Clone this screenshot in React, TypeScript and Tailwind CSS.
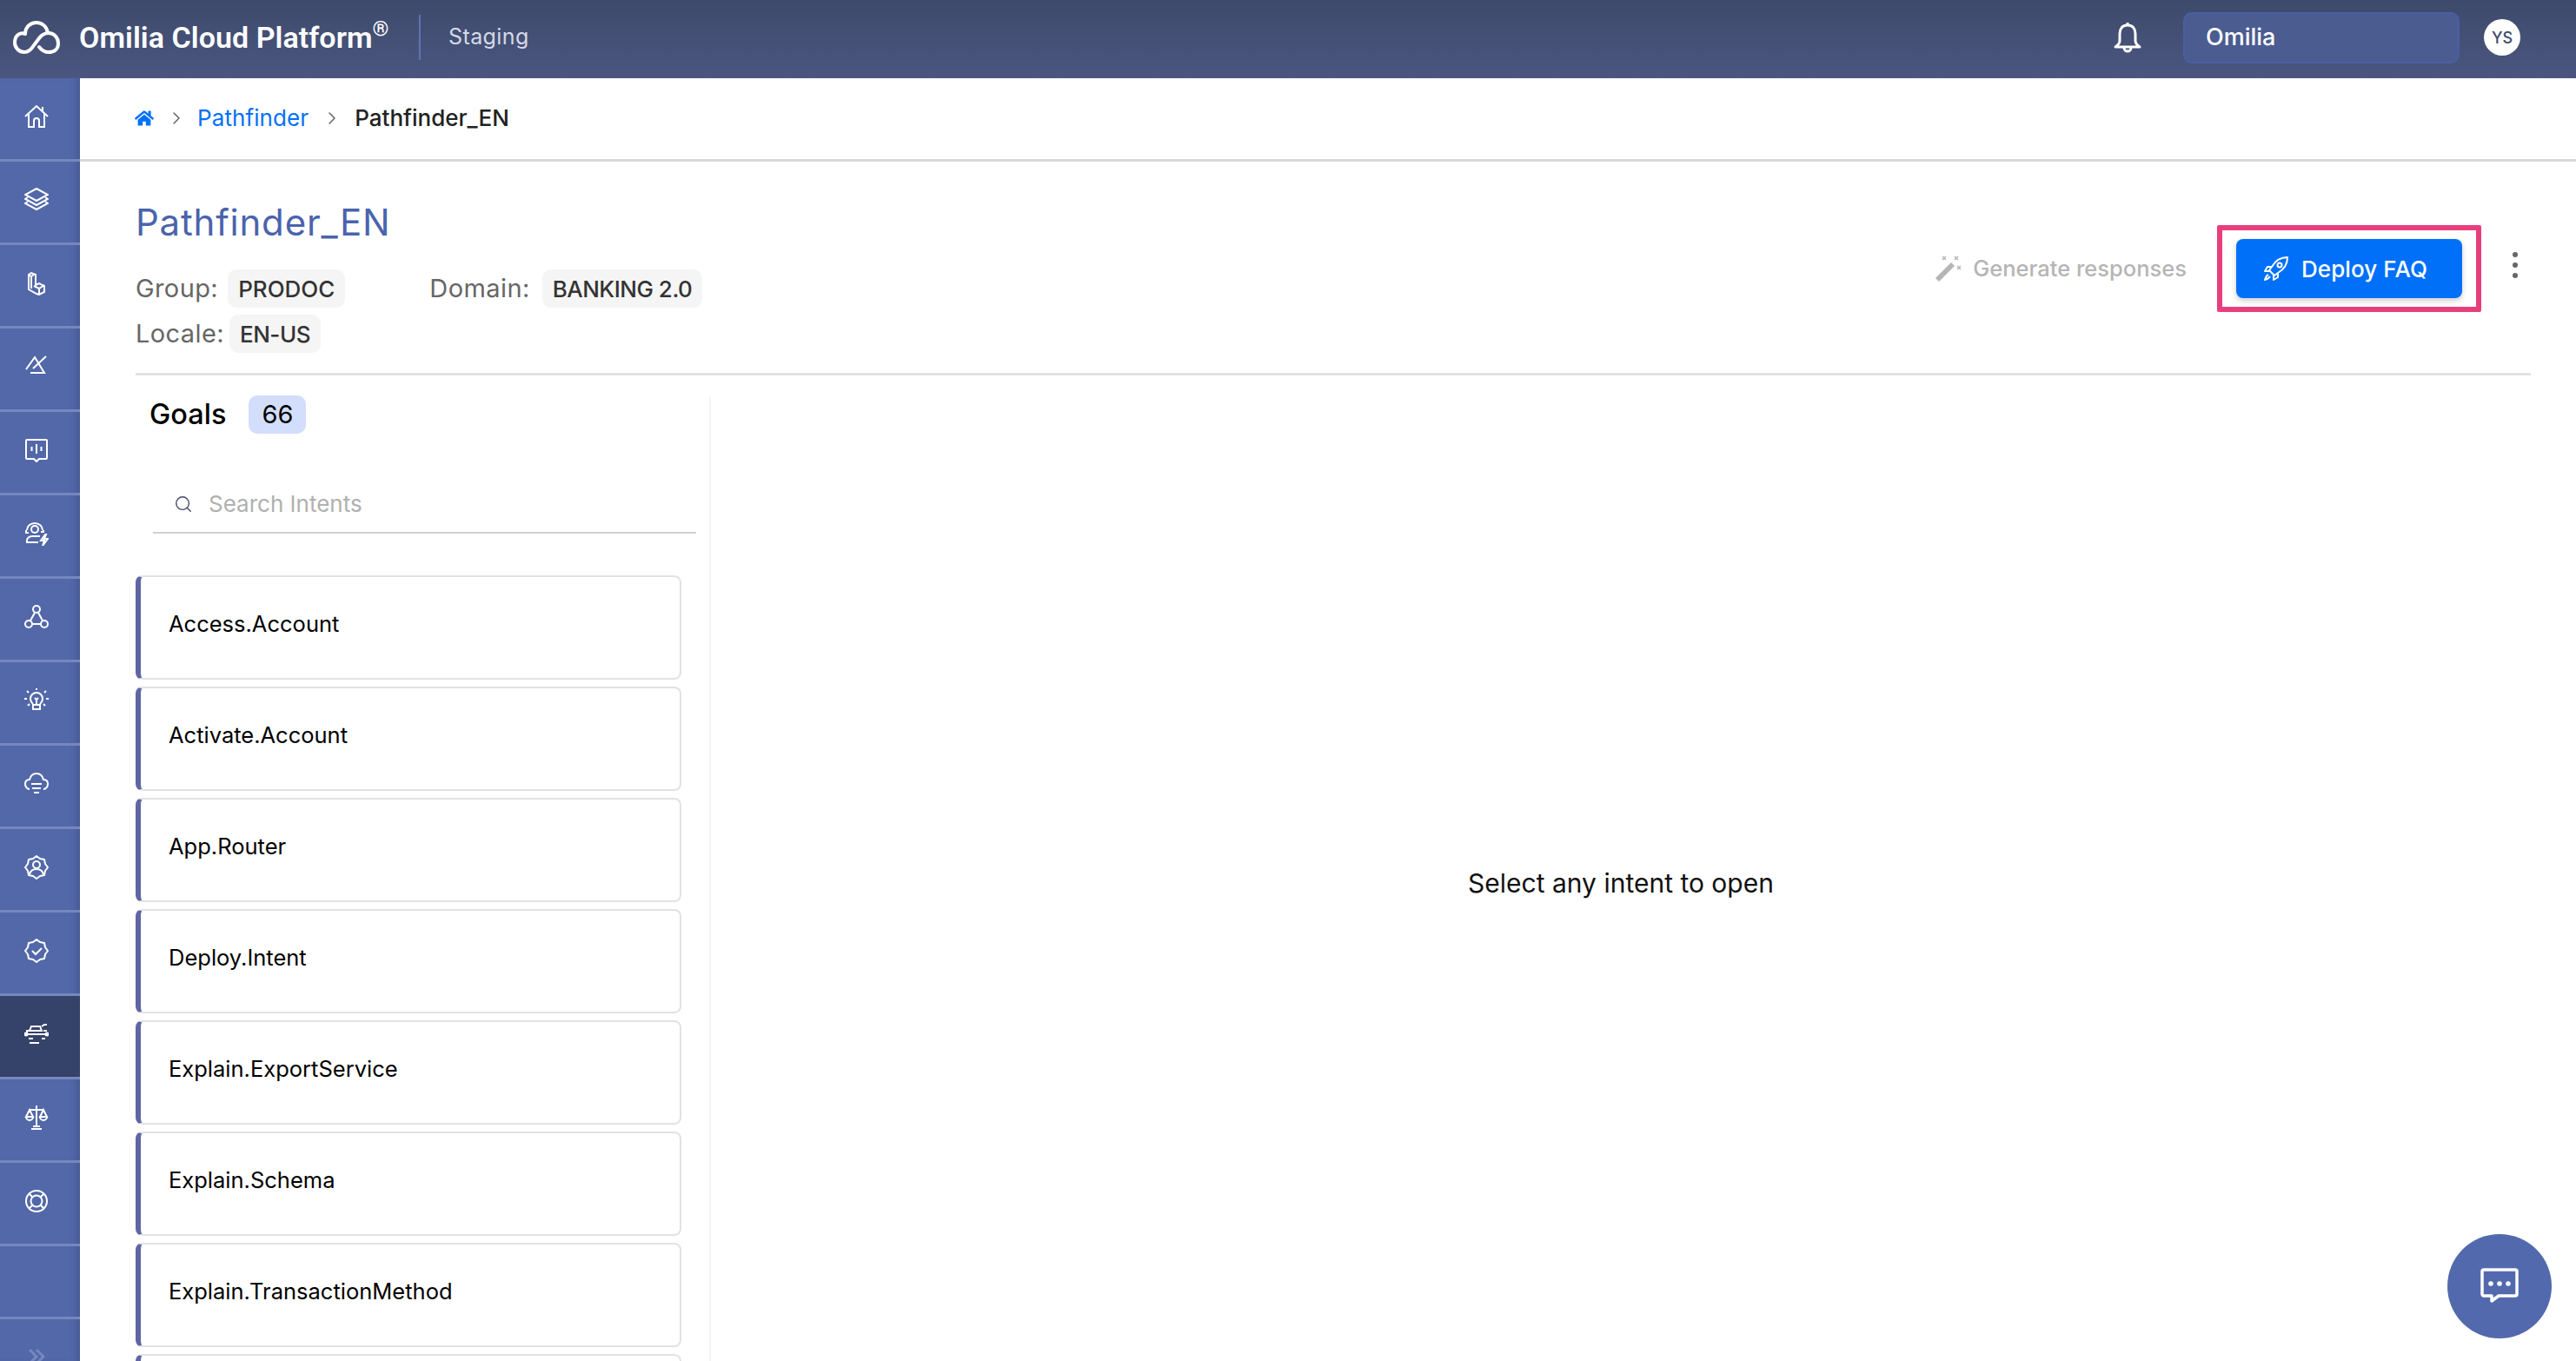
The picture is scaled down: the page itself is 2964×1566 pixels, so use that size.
import React from "react";
import { FaHome } from "react-icons/fa";
import { ChevronRight, Search } from "lucide-react";

const FONT = "font-['Inter','Noto_Sans',sans-serif]";

const navIcons: React.ReactNode[] = [
  <>
    <path d="M1 14 14 2l13 12" />
    <path d="M21 3v5" />
    <path d="M5 11v15h6v-7a3 3 0 0 1 6 0v7h6V11" />
  </>,
  <>
    <path d="M14 1 27 8 14 15 1 8Z" />
    <path d="M4 11 1 13l13 7 13-7-3-2" />
    <path d="M4 16l-3 2 13 7 13-7-3-2" />
  </>,
  <>
    <path d="M8 2 5 4v17l9 5 3 1 6-3v-7l-6-3-4 2V4Z" />
    <path d="M5 4l3 2 3-2M8 6v14M11 17l6 3 6-4M17 20v7" />
  </>,
  <>
    <path d="M2 17 12 3l11 18H7" />
    <path d="M25 2 10 16" />
  </>,
  <>
    <path d="M3 2h22a1 1 0 0 1 1 1v20a1 1 0 0 1-1 1h-8l-3 3-3-3H3a1 1 0 0 1-1-1V3a1 1 0 0 1 1-1Z" />
    <path d="M14 7v11M8.500 10v5M19.500 10v5" />
  </>,
  <>
    <circle cx="12" cy="9" r="4" />
    <path d="M3 10a9 8 0 0 1 18 0" />
    <path d="M2 10v3h3M22 10v2h-3" />
    <path d="M18 17H9c-3 0-6 2-6 5v2h13" />
    <path d="m24 15-5 7h4l-2 6 6-8h-4l2-5Z" />
  </>,
  <>
    <circle cx="14" cy="5" r="4" />
    <circle cx="5" cy="22" r="4" />
    <circle cx="23" cy="22" r="4" />
    <path d="M12 9 7 18M16 9l5 9M9 22h10" />
  </>,
  <>
    <path d="M10 19c0-2-3-3-3-7a7 7 0 0 1 14 0c0 4-3 5-3 7Z" />
    <path d="M10 19v5h8v-5M12 11l2 2 2-2M14 13v5" />
    <path d="M14 0v2M3 3l2 2M25 3l-2 2M0 12h3M25 12h3M4 20l2-2M24 20l-2-2" />
  </>,
  <>
    <path d="M6 20C3 20 1 17 1 14s2-5 5-5C7 5 10 2 14 2s7 3 8 7c3 0 5 2 5 5s-2 6-5 6" />
    <path d="M8 14h12M9 19h10M11 24h6" />
  </>,
  <>
    <path d="M14 1l4 3 5 1 1 5 3 4-3 4-1 5-5 1-4 3-4-3-5-1-1-5-3-4 3-4 1-5 5-1Z" strokeLinejoin="round" />
    <circle cx="14" cy="11" r="4" />
    <path d="M6 22c1-4 4-6 8-6s7 2 8 6" />
  </>,
  <>
    <path d="M14 1l4 3 5 1 1 5 3 4-3 4-1 5-5 1-4 3-4-3-5-1-1-5-3-4 3-4 1-5 5-1Z" strokeLinejoin="round" />
    <path d="m9 14 4 4 7-7" />
  </>,
  <>
    <path d="M8 5h10l2 5H6ZM3 14h22M3 14H1M25 14h2" />
    <path d="M6 10H3v4M10 19H5M6 24h11M20 19h4M20 5l3-2h3M22 10h4" />
    <circle cx="2" cy="14" r="1.500" fill="white" />
    <circle cx="26" cy="14" r="1.500" fill="white" />
  </>,
  <>
    <path d="M14 0v24M6 5h16M8 27h12M10 24h8" />
    <path d="M6 5 2 13h8ZM22 5l-4 8h8Z" />
    <path d="M2 13a4 4 0 0 0 8 0M18 13a4 4 0 0 0 8 0" />
  </>,
  <>
    <circle cx="14" cy="14" r="12" />
    <circle cx="14" cy="14" r="6.500" />
    <path d="m6 6 4 4M22 6l-4 4M6 22l4-4M22 22l-4-4" />
  </>,
];

const intents = [
  "Access.Account",
  "Activate.Account",
  "App.Router",
  "Deploy.Intent",
  "Explain.ExportService",
  "Explain.Schema",
  "Explain.TransactionMethod",
  "",
];

const Header = () => (
  <header className="h-[90px] shrink-0 pb-[4px] flex items-center bg-gradient-to-b from-[#3e4a6b] to-[#4a5680] text-white">
    <svg className="ml-[15px] w-[54px] h-[38px]" viewBox="0 0 54 38" fill="none" stroke="white" strokeWidth="4" strokeLinecap="round">
      <path d="M14 15C7 12 2 18 2 25c0 6 5 11 11 11 5 0 8-3 11-8l6-8c3-4 6-6 11-6 6 0 11 5 11 12s-5 10-11 10c-5 0-8-2-11-6" />
      <path d="M14 15c0-8 6-13 13-13 7 0 12 5 13 12" />
    </svg>
    <div className="ml-[22px] w-[355px] whitespace-nowrap text-[34px] leading-none font-semibold tracking-[0.05px] font-['Roboto',sans-serif]">
      Omilia Cloud Platform<sup className="text-[24px] font-normal top-[-14px] align-baseline relative">®</sup>
    </div>
    <div className="ml-[36px] w-[2px] h-[52px] bg-[#5d74b5]" />
    <div className="ml-[32px] text-[25px] font-normal text-[#d5d9e6] tracking-[0.4px]">Staging</div>
    <div className="ml-auto flex items-center">
      <svg className="w-[34px] h-[36px]" viewBox="0 0 34 36" fill="none" stroke="white" strokeWidth="3" strokeLinejoin="round">
        <path d="M17 4c-6 0-9 4-9 10v8c0 3-2 5-5 7h28c-3-2-5-4-5-7v-8c0-6-3-10-9-10Z" />
        <path d="M17 1v3M13 30a4 4 0 0 0 8 0" />
      </svg>
      <div className="ml-[47px] w-[318px] h-[59px] rounded-[10px] bg-[#4b5c91] border-2 border-[#4a5fa3] flex items-center pl-[24px] text-[27px] font-medium">
        Omilia
      </div>
      <div className="ml-[28px] mr-[64px] w-[42px] h-[42px] rounded-full bg-white text-[#3e4a6b] text-[18px] font-medium flex items-center justify-center">
        YS
      </div>
    </div>
  </header>
);

const Sidebar = () => (
  <aside className="w-[92px] shrink-0 flex flex-col bg-[#5268a9] shadow-[inset_-8px_0_8px_-6px_rgba(50,60,100,0.45)]">
    {navIcons.map((icon, i) => (
      <div
        key={i}
        className={`h-[96px] shrink-0 flex items-center justify-center pr-[8px] pb-[6px] border-b-[3px] border-[#7587bd] ${i === 11 ? "bg-[#354269]" : ""}`}
      >
        <svg className="w-[28px] h-[28px]" viewBox="0 0 28 28" fill="none" stroke="white" strokeWidth="2">
          {icon}
        </svg>
      </div>
    ))}
    <div className="h-[84px] shrink-0 border-b-[3px] border-[#7587bd]" />
    <div className="flex-1 flex items-end justify-center pr-[8px]">
      <svg className="w-[20px] h-[18px] mb-[-4px]" viewBox="0 0 20 18" fill="none" stroke="#7587bd" strokeWidth="3">
        <path d="m2 1 8 8-8 8M10 1l8 8-8 8" />
      </svg>
    </div>
  </aside>
);

const Chip = ({ children, className = "" }: { children: React.ReactNode; className?: string }) => (
  <span className={`h-[44px] px-[12px] rounded-[10px] bg-[#f5f5f5] text-[#333] text-[26px] font-medium flex items-center ${className}`}>
    {children}
  </span>
);

const Label = ({ children }: { children: React.ReactNode }) => (
  <span className="text-[29px] tracking-[0.4px] text-[#666] font-normal">{children}</span>
);

export default function App() {
  return (
    <div className={`relative h-[1566px] w-[2964px] overflow-hidden flex flex-col bg-white ${FONT}`}>
      <Header />
      <div className="flex flex-1 min-h-0">
        <Sidebar />
        <main className="flex-1 min-w-0 flex flex-col">
          <nav className="h-[96px] shrink-0 pb-[2px] border-b-[3px] border-[#d8d8d8] flex items-center pl-[63px] text-[26px]">
            <FaHome className="w-[22px] h-[20px] text-[#0070f9]" />
            <ChevronRight className="ml-[14px] w-[24px] h-[24px] text-[#666]" strokeWidth={1.500} />
            <span className="ml-[12px] text-[#0070f9] tracking-[0.1px]">Pathfinder</span>
            <ChevronRight className="ml-[15px] w-[24px] h-[24px] text-[#666]" strokeWidth={1.500} />
            <span className="ml-[14px] text-[#222] font-medium">Pathfinder_EN</span>
          </nav>

          <section className="mx-[64px] mr-[52px] pr-[15px] h-[246px] shrink-0 border-b-[3px] border-[#e2e2e2] flex justify-between">
            <div className="pt-[46px]">
              <h1 className="text-[42px] leading-[48px] tracking-[0.8px] text-[#4a63ad] font-normal">Pathfinder_EN</h1>
              <div className="mt-[30px] flex items-center">
                <Label>Group:</Label>
                <Chip className="ml-[11px]">PRODOC</Chip>
                <div className="ml-[97px]">
                  <Label>Domain:</Label>
                </div>
                <Chip className="ml-[14px] tracking-[-0.5px]">BANKING 2.0</Chip>
              </div>
              <div className="mt-[8px] flex items-center">
                <Label>Locale:</Label>
                <Chip className="ml-[6px] tracking-[-0.5px]">EN-US</Chip>
              </div>
            </div>
            <div className="flex items-start pt-[73px]">
              <div className="mt-[31px] flex items-center text-[25.500px] text-[#b5b5b5] font-medium">
                <svg className="w-[30px] h-[30px]" viewBox="0 0 30 30" fill="none">
                  <path d="M0 26 18 8l4 4L4 30Z" fill="#b5b5b5" />
                  <path d="m8 1 4 4m0-4L8 5M22 1l4 4m0-4-4 4M25 12l4 4m0-4-4 4" stroke="#b5b5b5" strokeWidth="1.500" />
                </svg>
                <span className="ml-[13px]">Generate responses</span>
              </div>
              <div className="ml-[35px] w-[304px] h-[100px] border-[6px] border-[#e83e7e] rounded-[2px] flex items-center justify-center">
                <button type="button" className="w-[260px] h-[68px] pr-[9px] rounded-[8px] bg-[#0070f9] text-white text-[26px] font-medium flex items-center justify-center shadow-[0_3px_6px_rgba(0,0,0,0.2)]">
                  <svg className="w-[30px] h-[30px]" viewBox="0 0 30 30" fill="none" stroke="white" strokeWidth="2" strokeLinejoin="round">
                    <path d="M28 2c-8 0-14 4-18 11l-3 4 6 6 4-3c7-4 11-10 11-18Z" />
                    <circle cx="19" cy="11" r="2.500" />
                    <path d="M10 13H5l-3 5h5M17 20v5l-5 3v-5M6 22c-2 1-3 3-4 6 3-1 5-2 6-4" />
                  </svg>
                  <span className="ml-[14px] tracking-[0.1px]">Deploy FAQ</span>
                </button>
              </div>
              <div className="ml-[36px] mt-[31px] flex flex-col gap-[6px]">
                <span className="w-[6px] h-[6px] rounded-full bg-[#666]" />
                <span className="w-[6px] h-[6px] rounded-full bg-[#666]" />
                <span className="w-[6px] h-[6px] rounded-full bg-[#666]" />
              </div>
            </div>
          </section>

          <div className="flex-1 min-h-0 flex mr-[52px]">
            <div className="w-[726px] shrink-0 mt-[23px] pl-[64px] pr-[32px] border-r-2 border-[#f4f4f4]">
              <div className="pl-[16px] h-[44px] flex items-center">
                <span className="text-[32.500px] font-medium text-black">Goals</span>
                <span className="ml-[26px] w-[66px] h-[44px] rounded-[10px] bg-[#d3defc] text-black text-[29px] flex items-center justify-center">66</span>
              </div>
              <div className="ml-[20px] mr-[-17px] mt-[50px] h-[65px] border-b-2 border-[#d0d0d0] flex items-center pl-[24px] pb-[2px]">
                <Search className="w-[22px] h-[22px] text-[#3e4a6b]" strokeWidth={1.500} />
                <span className="ml-[18px] text-[26px] text-[#b0b0b0]">Search Intents</span>
              </div>
              <div className="mt-[48px] flex flex-col gap-[8px]">
                {intents.map((name, i) => (
                  <div
                    key={i}
                    className="h-[120px] shrink-0 rounded-[8px] border-2 border-l-[6px] border-[#e2e2e2] border-l-[#5f66a3] pl-[32px] pb-[8px] flex items-center text-[25.500px] text-black"
                  >
                    {name}
                  </div>
                ))}
              </div>
            </div>
            <div className="flex-1 pt-[34px] flex items-center justify-center text-[30px] text-[#111]">
              Select any intent to open
            </div>
          </div>
        </main>
      </div>

      <div className="absolute left-[2816px] top-[1420px] w-[120px] h-[120px] rounded-full bg-[#526aad] flex items-center justify-center">
        <svg className="w-[44px] h-[42px]" viewBox="0 0 44 42" fill="none">
          <path d="M4 2h36a2 2 0 0 1 2 2v26a2 2 0 0 1-2 2H21l-8 6v-6H4a2 2 0 0 1-2-2V4a2 2 0 0 1 2-2Z" stroke="white" strokeWidth="3.500" strokeLinejoin="round" />
          <circle cx="12" cy="18" r="2.800" fill="white" />
          <circle cx="22" cy="18" r="2.800" fill="white" />
          <circle cx="32" cy="18" r="2.800" fill="white" />
        </svg>
      </div>
    </div>
  );
}
